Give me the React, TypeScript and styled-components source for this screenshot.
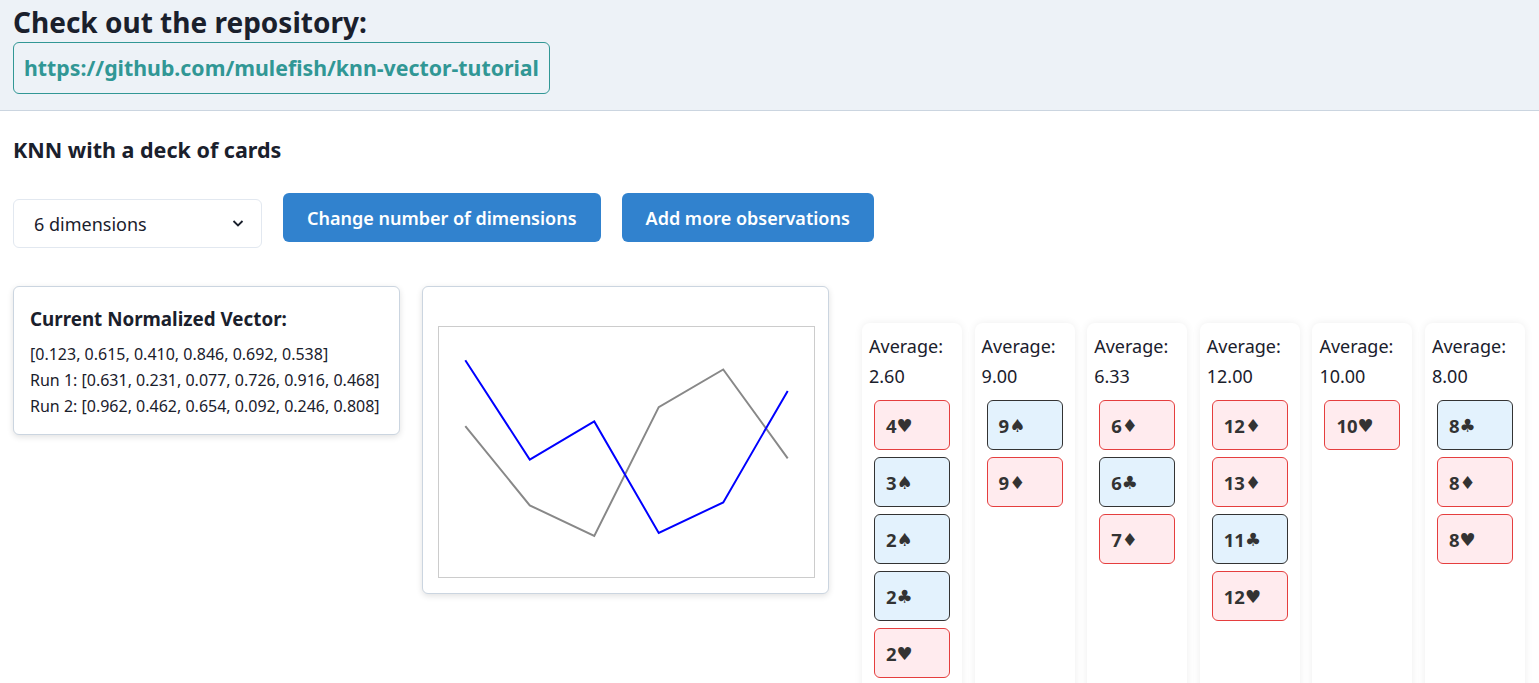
import React from "react";
import styled, { createGlobalStyle } from "styled-components";

const Global = createGlobalStyle`
  html, body { margin: 0; padding: 0; background: #ffffff; }
  body { font-family: "Noto Sans", "Open Sans", "DejaVu Sans", sans-serif; color: #1a202c; }
  * { box-sizing: border-box; }
`;

const Header = styled.header`
  background: #edf2f7;
  border-bottom: 1px solid #cbd5e0;
  padding: 4px 13px 16px;
`;

const Title = styled.h1`
  margin: 0;
  font-size: 28px;
  line-height: 36px;
  font-weight: 700;
  color: #1a202c;
`;

const RepoLink = styled.a`
  display: inline-block;
  margin-top: 2px;
  padding: 8px 10px 8px;
  border: 1px solid #319795;
  border-radius: 6px;
  color: #319795;
  font-size: 21.3px;
  line-height: 34px;
  font-weight: 700;
  text-decoration: none;
`;

const Main = styled.main`
  padding: 0 13px;
`;

const SectionTitle = styled.h2`
  margin: 24px 0 0;
  font-size: 21.5px;
  line-height: 30px;
  font-weight: 700;
`;

const Controls = styled.div`
  display: flex;
  align-items: flex-start;
  gap: 21px;
  margin-top: 28px;
`;

const SelectWrap = styled.div`
  position: relative;
  margin-top: 6px;
  width: 249px;
  height: 49px;
`;

const Select = styled.select`
  appearance: none;
  width: 100%;
  height: 100%;
  border: 1px solid #e2e8f0;
  border-radius: 6px;
  background: #ffffff;
  padding: 0 20px;
  font-family: inherit;
  font-size: 18px;
  color: #1a202c;
`;

const Chevron = styled.svg`
  position: absolute;
  right: 18px;
  top: 19px;
  width: 12px;
  height: 10px;
  pointer-events: none;
`;

const Button = styled.button`
  height: 49px;
  padding: 0 24px;
  border: none;
  border-radius: 6px;
  background: #3182ce;
  color: #ffffff;
  font-family: inherit;
  font-size: 18px;
  font-weight: 600;
`;

const ContentRow = styled.div`
  display: flex;
  align-items: flex-start;
  margin-top: 38px;
`;

const Panel = styled.div`
  background: #ffffff;
  border: 1px solid #cbd5e0;
  border-radius: 6px;
  box-shadow: 0 2px 6px rgba(0, 0, 0, 0.12);
`;

const VectorPanel = styled(Panel)`
  width: 387px;
  height: 149px;
  padding: 16px 16px;
`;

const VectorTitle = styled.h3`
  margin: 2px 0 8px;
  font-size: 18.8px;
  line-height: 28px;
  font-weight: 700;
`;

const VectorLine = styled.div`
  font-size: 16px;
  line-height: 26px;
`;

const ChartPanel = styled(Panel)`
  width: 407px;
  height: 308px;
  margin-left: 22px;
  padding: 39px 15px 15px;
`;

const ChartSvg = styled.svg`
  display: block;
  border: 1px solid #cccccc;
  background: #ffffff;
`;

const Columns = styled.div`
  display: flex;
  gap: 12.6px;
  margin-left: 33px;
  margin-top: 37px;
  align-items: stretch;
`;

const Column = styled.div`
  width: 100px;
  min-height: 380px;
  padding: 8px 7px 12px;
  background: #ffffff;
  border-radius: 8px;
  box-shadow: 0 0 8px rgba(0, 0, 0, 0.07);
`;

const Average = styled.div`
  font-size: 18px;
  line-height: 30px;
  margin-bottom: 9px;
`;

const CardList = styled.div`
  display: flex;
  flex-direction: column;
  gap: 7px;
  padding-left: 5px;
`;

const Card = styled.div<{ $red: boolean }>`
  width: 76px;
  height: 50px;
  border-radius: 6px;
  border: 1px solid ${(p) => (p.$red ? "#e53e3e" : "#333333")};
  background: ${(p) => (p.$red ? "#ffebee" : "#e3f2fd")};
  color: #333333;
  font-size: 18.5px;
  font-weight: 700;
  display: flex;
  align-items: center;
  padding-left: 11px;
`;

const Suit = styled.span`
  font-family: "DejaVu Sans", sans-serif;
  font-size: 18px;
`;

const run1 = [0.631, 0.231, 0.077, 0.726, 0.916, 0.468];
const run2 = [0.962, 0.462, 0.654, 0.092, 0.246, 0.808];

const toPoints = (vals: number[]) =>
  vals.map((v, i) => `${25 + i * 65},${25 + (1 - v) * 200}`).join(" ");

type CardT = { rank: string; suit: string };
const suitRed = (s: string) => s === "♥" || s === "♦";

const columns: { avg: string; cards: CardT[] }[] = [
  { avg: "2.60", cards: [{ rank: "4", suit: "♥" }, { rank: "3", suit: "♠" }, { rank: "2", suit: "♠" }, { rank: "2", suit: "♣" }, { rank: "2", suit: "♥" }] },
  { avg: "9.00", cards: [{ rank: "9", suit: "♠" }, { rank: "9", suit: "♦" }] },
  { avg: "6.33", cards: [{ rank: "6", suit: "♦" }, { rank: "6", suit: "♣" }, { rank: "7", suit: "♦" }] },
  { avg: "12.00", cards: [{ rank: "12", suit: "♦" }, { rank: "13", suit: "♦" }, { rank: "11", suit: "♣" }, { rank: "12", suit: "♥" }] },
  { avg: "10.00", cards: [{ rank: "10", suit: "♥" }] },
  { avg: "8.00", cards: [{ rank: "8", suit: "♣" }, { rank: "8", suit: "♦" }, { rank: "8", suit: "♥" }] },
];

export default function App() {
  return (
    <>
      <Global />
      <Header>
        <Title>Check out the repository:</Title>
        <RepoLink href="#">https://github.com/mulefish/knn-vector-tutorial</RepoLink>
      </Header>
      <Main>
        <SectionTitle>KNN with a deck of cards</SectionTitle>
        <Controls>
          <SelectWrap>
            <Select defaultValue="6">
              <option value="6">6 dimensions</option>
            </Select>
            <Chevron viewBox="0 0 12 10">
              <path d="M1.5 3 L6 7.5 L10.5 3" fill="none" stroke="#1a202c" strokeWidth="1.8" />
            </Chevron>
          </SelectWrap>
          <Button>Change number of dimensions</Button>
          <Button>Add more observations</Button>
        </Controls>
        <ContentRow>
          <VectorPanel>
            <VectorTitle>Current Normalized Vector:</VectorTitle>
            <VectorLine>[0.123, 0.615, 0.410, 0.846, 0.692, 0.538]</VectorLine>
            <VectorLine>Run 1: [0.631, 0.231, 0.077, 0.726, 0.916, 0.468]</VectorLine>
            <VectorLine>Run 2: [0.962, 0.462, 0.654, 0.092, 0.246, 0.808]</VectorLine>
          </VectorPanel>
          <ChartPanel>
            <ChartSvg width={377} height={252} viewBox="-1 -1 377 252">
              <polyline points={toPoints(run1)} fill="none" stroke="#888888" strokeWidth="2" />
              <polyline points={toPoints(run2)} fill="none" stroke="#0000ff" strokeWidth="2" />
            </ChartSvg>
          </ChartPanel>
          <Columns>
            {columns.map((c, i) => (
              <Column key={i}>
                <Average>
                  Average:
                  <br />
                  {c.avg}
                </Average>
                <CardList>
                  {c.cards.map((card, j) => (
                    <Card key={j} $red={suitRed(card.suit)}>
                      {card.rank}
                      <Suit>{card.suit}</Suit>
                    </Card>
                  ))}
                </CardList>
              </Column>
            ))}
          </Columns>
        </ContentRow>
      </Main>
    </>
  );
}
